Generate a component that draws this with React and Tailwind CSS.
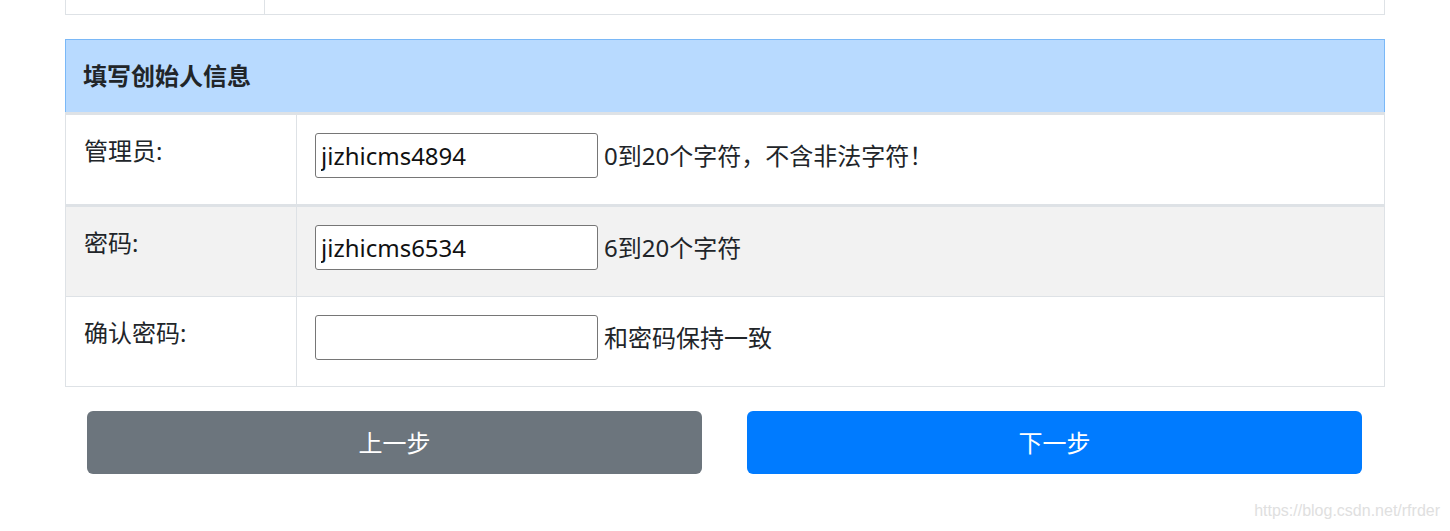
import React from "react";

const font = { fontFamily: '"Noto Sans", "Noto Sans CJK SC", sans-serif' };

function Row({ label, value, hint, striped }) {
  return (
    <div className={`flex h-[89px] ${striped ? "bg-[#f2f2f2]" : "bg-white"}`}>
      <div className="w-[231px] shrink-0 border-r border-[#dee2e6] pl-[18px] pt-[18px] text-[24px] leading-[36px] text-[#212529]">
        {label}
      </div>
      <div className="flex flex-1 items-start pl-[18px] pt-[18px]">
        <div className="flex items-center gap-[6px]">
          <input
            defaultValue={value}
            className="h-[45px] w-[283px] rounded-[3px] border border-[#767676] bg-white px-[5px] text-[24px] text-[#111] outline-none"
            style={font}
          />
          <span className="text-[24px] leading-[36px] text-[#212529]">{hint}</span>
        </div>
      </div>
    </div>
  );
}

export default function App() {
  return (
    <div className="relative h-[531px] w-[1450px] overflow-hidden bg-white" style={font}>
      <div className="ml-[65px] w-[1320px]">
        {/* top table fragment */}
        <div className="flex h-[15px] border-x border-b border-[#dee2e6]">
          <div className="w-[199px] border-r border-[#dee2e6]" />
          <div className="flex-1" />
        </div>

        {/* card */}
        <div className="mt-[24px] border-x border-b border-[#dee2e6]">
          <div className="-mx-px flex h-[73px] items-center border border-b-0 border-[#7ab8f7] bg-[#b8daff] pl-[17px] text-[24px] font-bold text-[#212529]">
            填写创始人信息
          </div>
          <div className="-mx-px h-[3px] bg-[#dee2e6]" />
          <Row label="管理员:" value="jizhicms4894" hint="0到20个字符，不含非法字符！" />
          <div className="h-[3px] bg-[#dee2e6]" />
          <Row label="密码:" value="jizhicms6534" hint="6到20个字符" striped />
          <div className="h-px bg-[#dee2e6]" />
          <Row label="确认密码:" value="" hint="和密码保持一致" />
        </div>

        {/* buttons */}
        <div className="mt-[24px] flex gap-[45px] pl-[22px]">
          <button className="flex h-[63px] w-[615px] items-center justify-center rounded-[6px] bg-[#6c757d] text-[24px] text-white">
            上一步
          </button>
          <button className="flex h-[63px] w-[615px] items-center justify-center rounded-[6px] bg-[#007bff] text-[24px] text-white">
            下一步
          </button>
        </div>
      </div>

      <div
        className="absolute right-[10px] top-[501px] text-[16px] leading-[20px] text-[#e0e0e0]"
        style={{ fontFamily: '"Liberation Sans", Arial, sans-serif' }}
      >
        https://blog.csdn.net/rfrder
      </div>
    </div>
  );
}
